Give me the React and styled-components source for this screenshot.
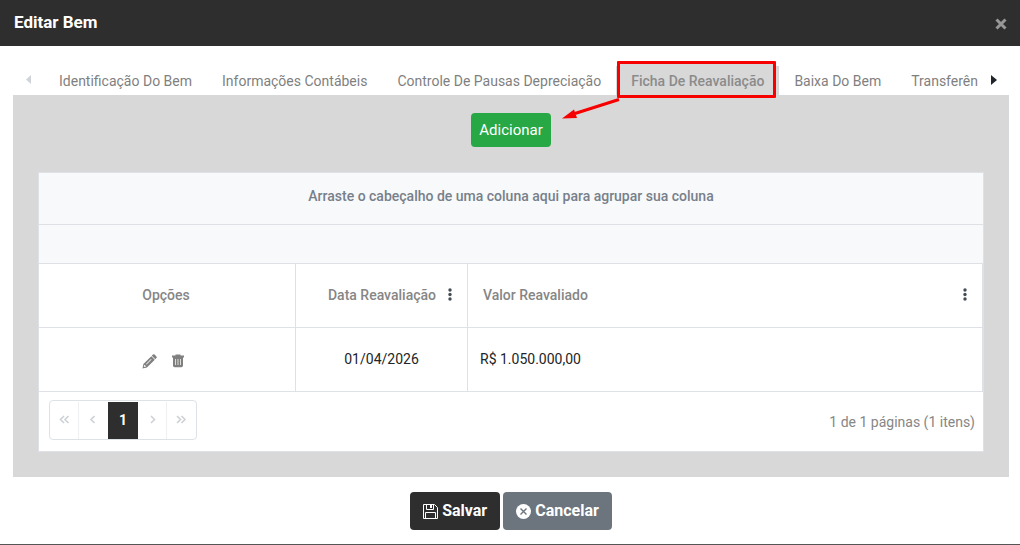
import React, { useState } from "react";
import styled, { createGlobalStyle } from "styled-components";

const GlobalStyle = createGlobalStyle`
  * {
    box-sizing: border-box;
  }
  body {
    margin: 0;
    background-color: #fff;
    color: #212529;
    font-family: Roboto, "Liberation Sans", sans-serif;
    font-size: 14px;
    line-height: 20px;
  }
  button {
    font-family: inherit;
    border: none;
    padding: 0;
    cursor: pointer;
  }
`;

const Modal = styled.div`
  display: flex;
  flex-direction: column;
  min-height: 100vh;
  border-bottom: 1px solid #555;
`;

const Header = styled.header`
  display: flex;
  align-items: center;
  justify-content: space-between;
  height: 46px;
  padding: 0 13px 2px 14px;
  background-color: #2e2e2e;
`;

const Title = styled.h1`
  margin: 0;
  color: #fff;
  font-size: 17px;
  line-height: 20px;
  font-weight: 700;
`;

const CloseButton = styled.button`
  display: flex;
  padding-top: 4px;
  background: none;
  color: #979797;
`;

const Body = styled.main`
  padding: 20px 11px 15px 13px;
`;

const TabBar = styled.div`
  display: flex;
  height: 29px;
`;

const TabArrow = styled.button`
  display: flex;
  align-items: center;
  justify-content: center;
  flex: 0 0 31px;
  padding-bottom: 2px;
  background: none;
  color: ${(props) => (props.disabled ? "#d0d3d8" : "#212529")};
`;

const TabList = styled.div`
  display: flex;
  flex: 1;
  min-width: 0;
  overflow-x: clip;
`;

const Tab = styled.button`
  position: relative;
  flex: none;
  padding: 0 15px;
  color: ${(props) => (props.$active ? "#8b8b8b" : "#7f7f7f")};
  background-color: ${(props) => (props.$active ? "#d8d8d8" : "transparent")};
  font-size: 14px;
  line-height: 20px;
  font-weight: ${(props) => (props.$active ? 500 : 400)};
  white-space: nowrap;
`;

const Highlight = styled.span`
  position: absolute;
  inset: -5px 3px -3px 1px;
  border: 3px solid #f60000;
  border-radius: 1px;
  background-color: #d8d8d8;
`;

const TabLabel = styled.span`
  position: relative;
  z-index: 1;
`;

const Pointer = styled.svg`
  position: absolute;
  top: 30px;
  left: -55px;
`;

const Panel = styled.section`
  display: flex;
  flex-direction: column;
  align-items: center;
  gap: 25px;
  padding: 18px 25px 25px;
  background-color: #d8d8d8;
`;

const AddButton = styled.button`
  height: 34px;
  padding: 0 8px;
  border-radius: 4px;
  background-color: #28a745;
  color: #fff;
  font-size: 15px;
`;

const Grid = styled.div`
  align-self: stretch;
  border: 1px solid #dee2e6;
  background-color: #fff;
`;

const GroupPanel = styled.div`
  padding: 13px 0 18px;
  border-bottom: 1px solid #dee2e6;
  background-color: #f8f9fb;
  color: #77808a;
  font-weight: 500;
  text-align: center;
`;

const Toolbar = styled.div`
  height: 38px;
  background-color: #f8f9fb;
`;

const Table = styled.table`
  width: 100%;
  table-layout: fixed;
  border-collapse: separate;
  border-spacing: 0;
  border-top: 1px solid #dee2e6;
`;

const Col = styled.col`
  width: ${(props) => props.$width || "auto"};
`;

const cell = `
  height: 64px;
  border-right: 1px solid #dee2e6;
  border-bottom: 1px solid #dee2e6;
`;

const Th = styled.th`
  ${cell}
  padding: 0 11px 2px 15px;
  color: #868686;
  font-weight: 500;
`;

const Td = styled.td`
  ${cell}
  padding: 0 12px 2px;
  text-align: ${(props) => props.$align || "center"};
`;

const HeadCell = styled.div`
  display: flex;
  align-items: center;
  gap: 8px;
`;

const HeadText = styled.span`
  flex: 1;
  text-align: ${(props) => props.$align || "left"};
`;

const HeadLabel = styled.span`
  padding-right: 6px;
`;

const MenuButton = styled.button`
  display: flex;
  background: none;
  color: #444c54;
`;

const Actions = styled.div`
  display: flex;
  justify-content: center;
  gap: 15px;
  padding-top: 5px;
  padding-right: 8px;
`;

const IconButton = styled.button`
  display: flex;
  background: none;
  color: #808080;
`;

const Pager = styled.div`
  display: flex;
  align-items: center;
  justify-content: space-between;
  padding: 8px 8px 11px 10px;
`;

const Pages = styled.nav`
  display: flex;
  height: 40px;
  padding: 1px 0 0;
  border: 1px solid #dee2e6;
  border-radius: 4px;
`;

const PageButton = styled.button`
  display: flex;
  align-items: center;
  justify-content: center;
  width: ${(props) => (props.$current ? 30 : 29)}px;
  padding-bottom: 2px;
  border-right: ${(props) => (props.$divider ? "1px solid #eef0f2" : "none")};
  background-color: ${(props) => (props.$current ? "#2e2e2e" : "transparent")};
  color: ${(props) => (props.$current ? "#fff" : "#ced1d5")};
  font-size: 14px;
  font-weight: 700;
`;

const PageInfo = styled.span`
  padding-top: 4px;
  color: #868686;
`;

const Footer = styled.footer`
  display: flex;
  justify-content: center;
  gap: 3px;
  padding: 0 0 14px 2px;
`;

const FooterButton = styled.button`
  display: flex;
  align-items: center;
  gap: 4px;
  height: 38px;
  padding: 0 13px;
  border-radius: 4px;
  background-color: ${(props) => props.$color};
  color: #fff;
  font-size: 16px;
  font-weight: 700;
`;

const FooterLabel = styled.span`
  padding-bottom: 2px;
`;

const TABS = [
  "Identificação Do Bem",
  "Informações Contábeis",
  "Controle De Pausas Depreciação",
  "Ficha De Reavaliação",
  "Baixa Do Bem",
  "Transferências",
];

const ROWS = [{ id: 1, date: "01/04/2026", value: "R$ 1.050.000,00" }];

const CHEVRONS = {
  first: "M5 1L1.500 4.500L5 8M9.500 1L6 4.500L9.500 8",
  prev: "M6.500 1L3 4.500L6.500 8",
  next: "M4 1L7.500 4.500L4 8",
  last: "M1 1L4.500 4.500L1 8M5.500 1L9 4.500L5.500 8",
};

const Chevron = ({ type }) => (
  <svg width="11" height="9" viewBox="0 0 11 9" fill="none" stroke="currentColor" strokeWidth="1.6">
    <path d={CHEVRONS[type]} />
  </svg>
);

const CloseIcon = () => (
  <svg width="12" height="12" viewBox="0 0 12 12" stroke="currentColor" strokeWidth="3">
    <path d="M1.5 1.5l9 9M10.5 1.5l-9 9" />
  </svg>
);

const DotsIcon = () => (
  <svg width="12" height="14" viewBox="0 0 12 14" fill="currentColor">
    <circle cx="6" cy="2" r="1.7" />
    <circle cx="6" cy="6.5" r="1.7" />
    <circle cx="6" cy="11" r="1.7" />
  </svg>
);

const PencilIcon = () => (
  <svg width="15" height="15" viewBox="0 0 15 15" fill="currentColor">
    <path d="M9.8 1.7l1.1-1.1a1.2 1.2 0 0 1 1.7 0l1.8 1.8a1.2 1.2 0 0 1 0 1.7l-1.1 1.1z" />
    <path fillRule="evenodd" d="M9.300 2.200l3.500 3.500-7.900 7.900L.5 14.500l.9-4.400zM2.300 11l-.4 2 2-.4v-.8h-.8V11zM4 9.900l.5.5 5-5-.5-.5z" />
  </svg>
);

const TrashIcon = () => (
  <svg width="12" height="14" viewBox="0 0 12 14" fill="currentColor">
    <path d="M3.500 0.500h5v1H12v2H0v-2h3.500z" />
    <path d="M1 3h10v8.600a1.600 1.600 0 0 1-1.600 1.600H2.600A1.600 1.600 0 0 1 1 11.600z" />
    <path d="M3.500 5v6M6 5v6M8.500 5v6" stroke="#dcdcd4" />
  </svg>
);

const SaveIcon = () => (
  <svg width="15" height="15" viewBox="0 0 15 15" fill="none" stroke="currentColor">
    <path d="M.5.5h11l3 3v11H.5z" />
    <path d="M3.5.5v5h7v-5M2.5 14.5v-6h10v6" />
    <path d="M7 1h2v3H7z" fill="currentColor" stroke="none" />
  </svg>
);

const CancelIcon = () => (
  <svg width="15" height="15" viewBox="0 0 15 15">
    <circle cx="7.5" cy="7.5" r="7.5" fill="currentColor" />
    <path d="M4.5 4.5l6 6M10.5 4.5l-6 6" stroke="#6c757d" strokeWidth="1.4" />
  </svg>
);

const App = () => {
  const [activeTab, setActiveTab] = useState(3);

  return (
    <>
      <GlobalStyle />
      <Modal>
        <Header>
          <Title>Editar Bem</Title>
          <CloseButton aria-label="Fechar"><CloseIcon /></CloseButton>
        </Header>

        <Body>
          <TabBar>
            <TabArrow disabled aria-label="Anterior">
              <svg width="5" height="9" viewBox="0 0 5 9" fill="currentColor"><path d="M5 0v9L0 4.5z" /></svg>
            </TabArrow>
            <TabList role="tablist">
              {TABS.map((tab, index) => (
                <Tab
                  key={tab}
                  role="tab"
                  aria-selected={index === activeTab}
                  $active={index === activeTab}
                  onClick={() => setActiveTab(index)}
                >
                  {index === 3 &&
                    <>
                      <Highlight />
                      <Pointer width="60" height="26" viewBox="0 0 60 26">
                        <path d="M58 3.5L14 17.5" stroke="#f60000" strokeWidth="3" />
                        <path d="M1 22.5L13 13.5L16 22z" fill="#f60000" />
                      </Pointer>
                    </>
                  }
                  <TabLabel>{tab}</TabLabel>
                </Tab>
              ))}
            </TabList>
            <TabArrow aria-label="Próximo">
              <svg width="6" height="10" viewBox="0 0 6 10" fill="currentColor"><path d="M0 0v10l6-5z" /></svg>
            </TabArrow>
          </TabBar>

          <Panel role="tabpanel">
            <AddButton>Adicionar</AddButton>

            <Grid>
              <GroupPanel>Arraste o cabeçalho de uma coluna aqui para agrupar sua coluna</GroupPanel>
              <Toolbar />
              <Table>
                <colgroup>
                  <Col $width="257px" />
                  <Col $width="172px" />
                  <Col />
                </colgroup>
                <thead>
                  <tr>
                    <Th><HeadLabel>Opções</HeadLabel></Th>
                    <Th>
                      <HeadCell>
                        <HeadText $align="right">Data Reavaliação</HeadText>
                        <MenuButton aria-label="Menu da coluna"><DotsIcon /></MenuButton>
                      </HeadCell>
                    </Th>
                    <Th>
                      <HeadCell>
                        <HeadText>Valor Reavaliado</HeadText>
                        <MenuButton aria-label="Menu da coluna"><DotsIcon /></MenuButton>
                      </HeadCell>
                    </Th>
                  </tr>
                </thead>
                <tbody>
                  {ROWS.map((row) => (
                    <tr key={row.id}>
                      <Td>
                        <Actions>
                          <IconButton aria-label="Editar"><PencilIcon /></IconButton>
                          <IconButton aria-label="Excluir"><TrashIcon /></IconButton>
                        </Actions>
                      </Td>
                      <Td>{row.date}</Td>
                      <Td $align="left">{row.value}</Td>
                    </tr>
                  ))}
                </tbody>
              </Table>

              <Pager>
                <Pages aria-label="Paginação">
                  <PageButton $divider aria-label="Primeira"><Chevron type="first" /></PageButton>
                  <PageButton aria-label="Anterior"><Chevron type="prev" /></PageButton>
                  <PageButton $current>1</PageButton>
                  <PageButton $divider aria-label="Próxima"><Chevron type="next" /></PageButton>
                  <PageButton aria-label="Última"><Chevron type="last" /></PageButton>
                </Pages>
                <PageInfo>1 de 1 páginas (1 itens)</PageInfo>
              </Pager>
            </Grid>
          </Panel>
        </Body>

        <Footer>
          <FooterButton $color="#2e2e2e"><SaveIcon /><FooterLabel>Salvar</FooterLabel></FooterButton>
          <FooterButton $color="#6c757d"><CancelIcon /><FooterLabel>Cancelar</FooterLabel></FooterButton>
        </Footer>
      </Modal>
    </>
  );
};

export default App;
